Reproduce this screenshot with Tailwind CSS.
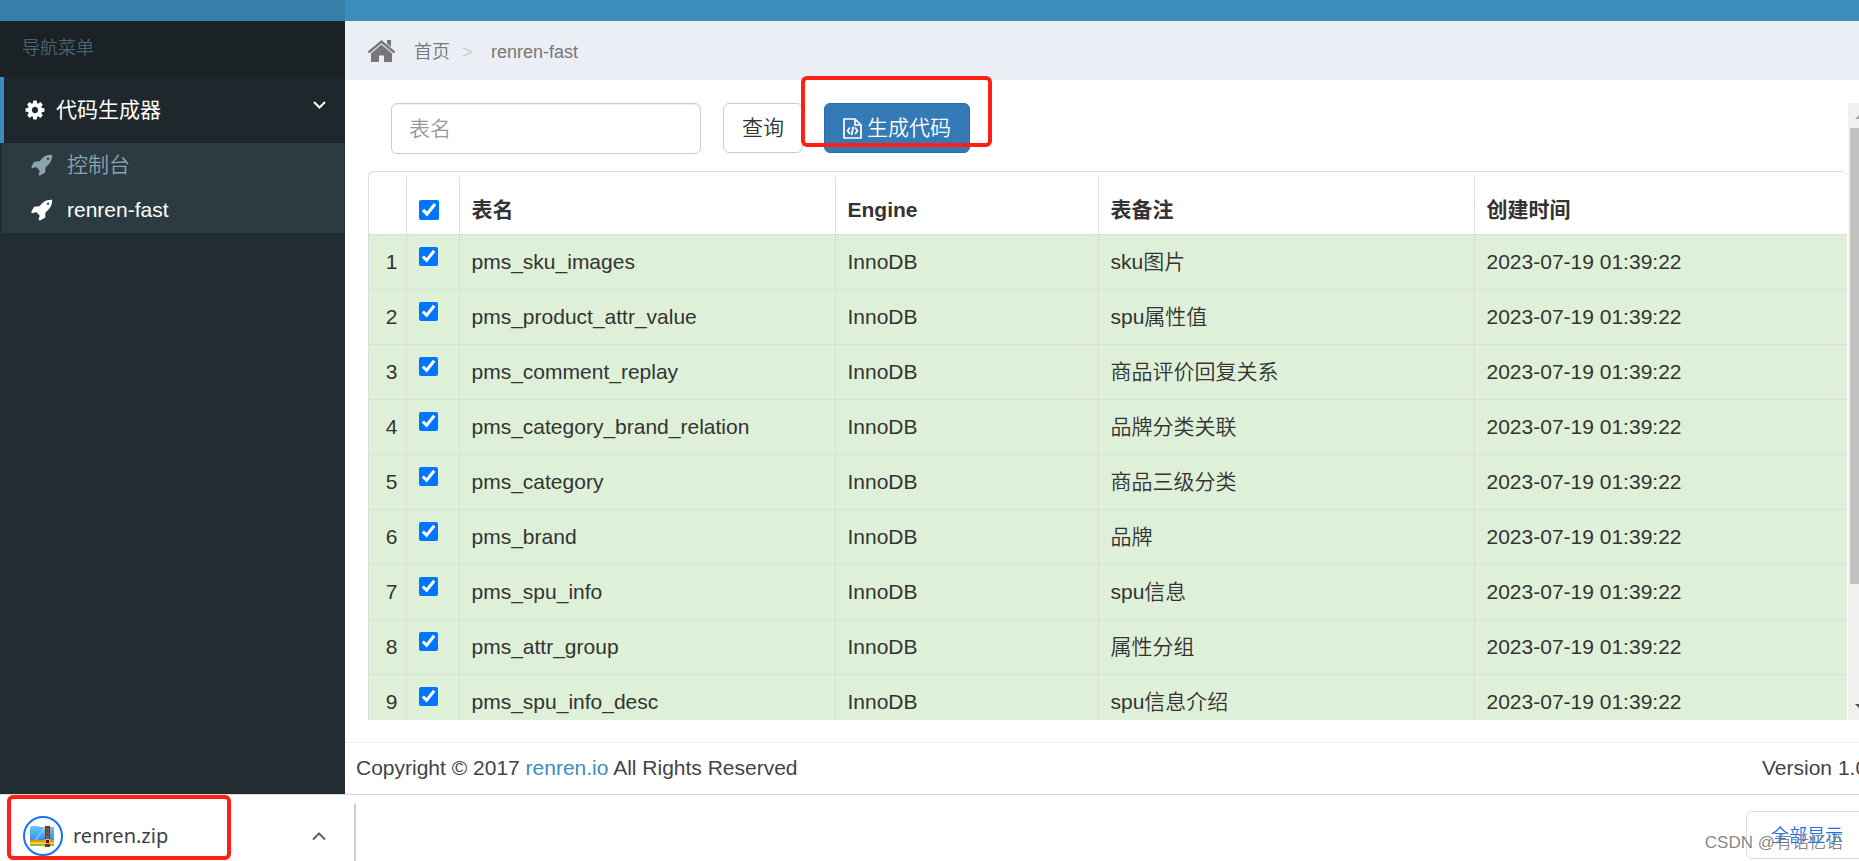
<!DOCTYPE html>
<html lang="zh-CN">
<head>
<meta charset="utf-8">
<title>代码生成器</title>
<script src="https://cdn.jsdelivr.net/npm/@tailwindcss/browser@4"></script>
</head>
<body class="relative flex h-screen flex-col overflow-hidden bg-white font-['Liberation_Sans','Noto_Sans_CJK_SC',sans-serif] text-[21px] leading-[30px] text-[#333]">
<svg class="hidden">
  <symbol id="rocket" viewBox="0 0 1792 1792"><path fill="currentColor" d="M1504 448q0-40-28-68t-68-28-68 28-28 68 28 68 68 28 68-28 28-68zm224-288q0 249-75.5 430.5t-253.5 360.5q-81 80-195 176l-20 379q-2 16-16 26l-384 224q-7 4-16 4-12 0-23-9l-64-64q-13-14-8-32l85-276-281-281-276 85q-3 1-9 1-14 0-23-9l-64-64q-17-19-5-39l224-384q10-14 26-16l379-20q96-114 176-195 188-187 358-258t431-71q14 0 24 9.5t10 22.5z"/></symbol>
</svg>

<header class="flex h-[21px] shrink-0 bg-[#3c8dbc]"><div class="w-[345px] bg-[#367fa9]"></div></header>

<div class="flex min-h-0 flex-1">
  <aside class="w-[345px] shrink-0 bg-[#222d32]">
    <h2 class="flex h-14 items-center bg-[#1a2226] pb-0.5 pl-[22px] text-lg font-[350] text-[#4b646f]">导航菜单</h2>
    <nav>
      <button class="flex h-[66px] w-full items-center border-l-4 border-[#3c8dbc] bg-[#1e282c] pr-[18px] pl-5 text-left text-white">
        <svg class="size-[22px]" viewBox="0 0 1792 1792"><path fill="currentColor" d="M1152 896q0-106-75-181t-181-75-181 75-75 181 75 181 181 75 181-75 75-181zm512-109v222q0 12-8 23t-20 13l-185 28q-19 54-39 91 35 50 107 138 10 12 10 25t-9 23q-27 37-99 108t-94 71q-12 0-26-9l-138-108q-44 23-91 38-16 136-29 186-7 28-36 28h-222q-14 0-24.5-8.5t-11.5-21.5l-28-184q-49-16-90-37l-141 107q-10 9-25 9-14 0-25-11-126-114-165-168-7-10-7-23 0-12 8-23 15-21 51-66.5t54-70.5q-27-50-41-99l-183-27q-13-2-21-12.5t-8-23.5v-222q0-12 8-23t19-13l186-28q14-46 39-92-40-57-107-138-10-12-10-24 0-10 9-23 26-36 98.5-107.5t94.5-71.5q13 0 26 10l138 107q44-23 91-38 16-136 29-186 7-28 36-28h222q14 0 24.5 8.5t11.5 21.5l28 184q49 16 90 37l142-107q9-9 24-9 13 0 25 10 129 119 165 170 7 8 7 22 0 12-8 23-15 21-51 66.5t-54 70.5q26 50 41 98l183 28q13 2 21 12.5t8 23.5z"/></svg>
        <span class="flex-1 pl-2.5">代码生成器</span>
        <svg class="mb-2.5 h-2 w-4" viewBox="0 0 16 8" fill="none" stroke="currentColor" stroke-width="2"><path d="M3 1l5.500 5.500L14 1"/></svg>
      </button>
      <ul class="mr-px ml-0.5 bg-[#2c3b41]">
        <li><a href="#" class="flex h-[45px] items-center gap-[14px] pb-0.5 pl-7 font-[350] text-[#8aa4af]"><svg class="size-[23px]"><use href="#rocket"/></svg><span>控制台</span></a></li>
        <li><a href="#" class="flex h-[45px] items-center gap-[14px] pb-0.5 pl-7 text-white"><svg class="size-[23px]"><use href="#rocket"/></svg><span>renren-fast</span></a></li>
      </ul>
    </nav>
  </aside>

  <div class="flex min-w-0 flex-1 flex-col">
    <nav class="flex h-[59px] shrink-0 items-center bg-[#ebeef4] pl-[22px] text-lg text-[#777]">
      <svg class="h-[24px] w-[29px]" viewBox="0 0 29 24" fill="#777"><path d="M20 1h4v7l-4-3.500z"/><path d="M1.500 13.500L14.500 2.500L27.500 13.500" fill="none" stroke="#777" stroke-width="2.400"/><path d="M4 14.500L14.500 5.500L25 14.500V23H17v-6.500h-5V23H4z"/></svg>
      <a href="#" class="pt-0.5 pl-[18px] font-[350]">首页</a>
      <span class="w-[41px] pt-0.5 pl-3 text-[#ccc]">&gt;</span>
      <span class="pt-0.5">renren-fast</span>
    </nav>

    <main class="flex min-h-0 flex-1 flex-col pt-[23px] pb-[22px]">
      <div class="relative flex min-h-0 flex-1 pl-[23px]">
        <div class="flex min-w-0 flex-1 flex-col">
          <div class="flex h-[68px] shrink-0 items-start pl-[23px]">
            <input type="text" aria-label="表名" placeholder="表名" class="h-[51px] w-[310px] rounded-md border border-[#ccc] px-[17px] font-[350] shadow-[inset_0_1px_1px_rgba(0,0,0,0.075)] placeholder:text-[#999]">
            <button class="ml-[22px] h-[50px] w-20 rounded-md border border-[#ccc] font-[350]">查询</button>
            <div class="relative ml-[21px]">
              <button class="flex h-[50px] w-[146px] items-center justify-center gap-[5px] rounded-md border border-[#2e6da4] bg-[#337ab7] font-[350] text-white">
                <svg class="h-[21px] w-[19px]" viewBox="0 0 19 21" fill="none" stroke="#fff" stroke-width="1.700"><path d="M1 1H12L18 7V20H1zM12 1v6h6"/><path d="M7 9.500L4.500 12.700L7 16M12 9.500L14.500 12.700L12 16M10.400 8.500L8.600 17"/></svg>
                <span>生成代码</span>
              </button>
              <!-- Highlight around the generate action -->
              <div class="pointer-events-none absolute -top-[27px] -left-[23px] h-[71px] w-[191px] rounded-md border-4 border-[#ff2015]"></div>
            </div>
          </div>
          <div class="mr-px min-h-0 flex-1 overflow-hidden rounded-t-md border-t border-l border-[#ddd] pt-[5px]">
            <table class="w-full table-fixed border-collapse">
              <colgroup><col class="w-[37px]"><col class="w-[53px]"><col class="w-[376px]"><col class="w-[263px]"><col class="w-[376px]"><col></colgroup>
              <thead>
                <tr class="h-[57px] border-b border-[#ddd] text-left [&>th]:pt-2.5 [&>th:not(:last-child)]:border-r [&>th]:border-[#ddd]">
                  <th></th>
                  <th class="pl-3"><input type="checkbox" checked aria-label="全选" class="block size-5 accent-[#0075ff]"></th>
                  <th class="pl-3">表名</th><th class="pl-3">Engine</th><th class="pl-3">表备注</th><th class="pl-3">创建时间</th>
                </tr>
              </thead>
              <tbody id="rows"></tbody>
            </table>
          </div>
        </div>
        <div class="flex w-[11px] shrink-0 flex-col overflow-hidden bg-[#f0f0f0]" aria-hidden="true">
          <svg class="h-[25px] w-[11px] shrink-0"><path d="M7 16l6-6v6z" fill="#a0a0a0"/></svg>
          <div class="ml-0.5 h-[456px] bg-[#c1c1c1]"></div>
          <svg class="mt-auto h-[25px] w-[11px] shrink-0"><path d="M7 9l6 6V9z" fill="#505050"/></svg>
        </div>
      </div>
    </main>

    <footer class="flex h-[52px] shrink-0 items-center justify-between border-t border-[#eee] pb-0.5 pl-[11px] text-[#444]">
      <p>Copyright © 2017 <a href="#" class="text-[#3c8dbc]">renren.io</a> All Rights Reserved</p>
      <p class="w-[97px] overflow-hidden whitespace-nowrap">Version 1.0.0</p>
    </footer>
  </div>
</div>

<!-- Download shelf -->
<section class="relative flex h-[67px] shrink-0 items-end border-t border-[#d9d9db] bg-white text-[#3c4043]">
  <div class="flex h-[57px] w-[356px] items-center border-r-2 border-[#ccc] pt-2 pr-[27px] pb-0.5 pl-[23px]">
    <svg class="size-10" viewBox="0 0 40 40">
      <defs><linearGradient id="folder" x1="0" y1="0" x2="0" y2="1"><stop stop-color="#6fc5f7"/><stop offset="1" stop-color="#2a94e8"/></linearGradient></defs>
      <circle cx="20" cy="20" r="19" fill="#fff" stroke="#1a73e8" stroke-width="2"/>
      <path d="M7 30h24v-4H7z" fill="#83c141"/><path d="M7 24h24v4H7z" fill="#ffc928"/><path d="M7 23h24v3H7z" fill="#f28a18"/>
      <path d="M7 12q0-2 2-2h6l2 1h14v13H7z" fill="url(#folder)"/><path d="M11 24l10-13h3L14 24z" fill="#a1dcfc" opacity=".45"/>
      <path d="M22 10h5v21h-5z" fill="#7b3512"/><path d="M23 12h3v11h-3z" fill="#99502a"/><path d="M22.500 23.500h4v4h-4z" fill="#3c1c10" stroke="#e8c070"/><path d="M24 14h1v1h-1zM24 18h1v1h-1z" fill="#2d160d"/>
    </svg>
    <span class="flex-1 pl-2.5 font-['Noto_Sans',sans-serif] text-[20px]">renren.zip</span>
    <button aria-label="下载选项"><svg class="h-2.5 w-4" viewBox="0 0 16 10" fill="none" stroke="#5f6368" stroke-width="2"><path d="M2 8.500l6-6 6 6"/></svg></button>
  </div>
  <div class="ml-auto mb-0.5 w-[113px] overflow-hidden">
    <button class="block h-12 w-[140px] rounded-md border border-[#dadce0] pt-0.5 pl-6 text-left text-lg font-[350] text-[#1a73e8]">全部显示</button>
  </div>
  <div class="pointer-events-none absolute top-0 left-[7px] h-[65px] w-[224px] rounded-md border-4 border-[#ff2015]"></div>
  <div class="pointer-events-none absolute right-4 bottom-1 text-[17px] leading-7 font-[350] text-[#777]/90">CSDN @有话忆语</div>
</section>

<script>
  const tables = [
    ['pms_sku_images', 'sku图片'],
    ['pms_product_attr_value', 'spu属性值'],
    ['pms_comment_replay', '商品评价回复关系'],
    ['pms_category_brand_relation', '品牌分类关联'],
    ['pms_category', '商品三级分类'],
    ['pms_brand', '品牌'],
    ['pms_spu_info', 'spu信息'],
    ['pms_attr_group', '属性分组'],
    ['pms_spu_info_desc', 'spu信息介绍']
  ];
  document.getElementById('rows').innerHTML = tables.map(([name, note], i) => `
    <tr class="h-[55px] border-b border-[#ddd] bg-[#dff0d8] font-[350] [&>td:not(:last-child)]:border-r [&>td]:border-[#ddd]">
      <td class="pr-2 text-right">${i + 1}</td>
      <td class="pt-3 pl-3 align-top"><input type="checkbox" checked aria-label="${name}" class="block size-[19px] accent-[#0075ff]"></td>
      <td class="pl-3">${name}</td>
      <td class="pl-3">InnoDB</td>
      <td class="pl-3">${note}</td>
      <td class="pl-3">2023-07-19 01:39:22</td>
    </tr>`).join('');
</script>
</body>
</html>
